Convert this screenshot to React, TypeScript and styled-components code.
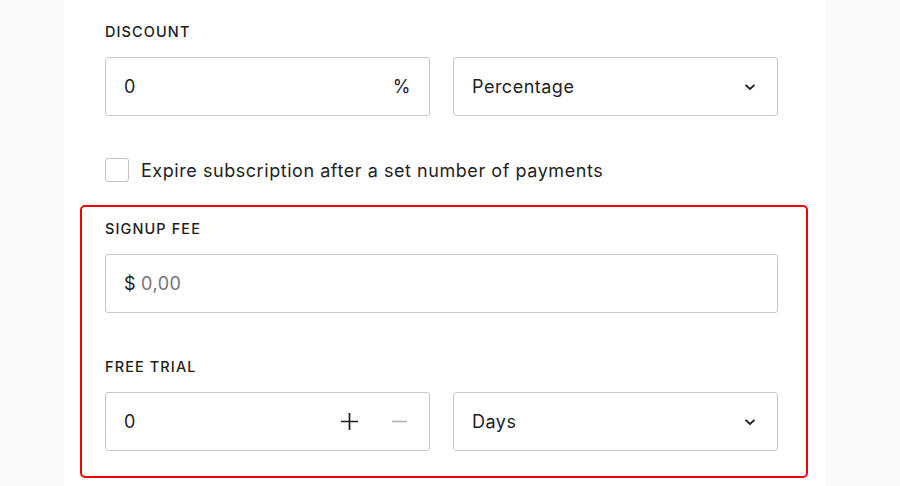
import styled, { createGlobalStyle } from 'styled-components';

const GlobalStyle = createGlobalStyle`
  html, body {
    margin: 0;
    padding: 0;
    background: #fafafa;
  }
  body {
    font-family: Inter, "Noto Sans", "Liberation Sans", sans-serif;
    color: #1e1e1e;
  }
`;

export default function App() {
  return (
    <>
      <GlobalStyle />
      <Page>
        <Panel>
          <Label>Discount</Label>
          <Row>
            <InputBox>
              <Value>0</Value>
              <Suffix>%</Suffix>
            </InputBox>
            <SelectBox>
              <Value>Percentage</Value>
              <Chevron />
            </SelectBox>
          </Row>

          <CheckRow>
            <CheckBox />
            <CheckText>Expire subscription after a set number of payments</CheckText>
          </CheckRow>

          <Highlight>
            <Label>Signup fee</Label>
            <InputBox>
              <Prefix>$</Prefix>
              <Placeholder>0,00</Placeholder>
            </InputBox>

            <Label $spaced>Free trial</Label>
            <Row>
              <InputBox>
                <Value>0</Value>
                <Stepper>
                  <StepButton aria-label="Increment">
                    <svg width="19" height="19" viewBox="0 0 19 19">
                      <path d="M9.5 1v17M1 9.5h17" stroke="#1e1e1e" strokeWidth="1.7" fill="none" />
                    </svg>
                  </StepButton>
                  <StepButton aria-label="Decrement">
                    <svg width="17" height="19" viewBox="0 0 17 19">
                      <path d="M1 9.5h15" stroke="#b4b4b4" strokeWidth="1.7" fill="none" />
                    </svg>
                  </StepButton>
                </Stepper>
              </InputBox>
              <SelectBox>
                <Value>Days</Value>
                <Chevron />
              </SelectBox>
            </Row>
          </Highlight>
        </Panel>
      </Page>
    </>
  );
}

function Chevron() {
  return (
    <ChevronIcon width="12" height="8" viewBox="0 0 12 8">
      <path d="M1.5 1.8 6 6 10.5 1.8" stroke="#1e1e1e" strokeWidth="1.8" fill="none" />
    </ChevronIcon>
  );
}

const Page = styled.div`
  display: flex;
  min-height: 486px;
  background: #fafafa;
`;

const Panel = styled.main`
  margin-left: 64px;
  width: 762px;
  box-sizing: border-box;
  min-height: 486px;
  background: #ffffff;
  padding: 22px 0 0 41px;
  display: flex;
  flex-direction: column;
`;

const Label = styled.div<{ $spaced?: boolean }>`
  font-size: 14.5px;
  line-height: 20px;
  font-weight: 500;
  text-transform: uppercase;
  letter-spacing: 1.1px;
  color: #1e1e1e;
  margin-top: ${(p) => (p.$spaced ? '44px' : '0')};
  margin-bottom: 15px;
`;

const Row = styled.div`
  display: grid;
  grid-template-columns: 325px 325px;
  column-gap: 23px;
  width: 673px;
`;

const Field = styled.div`
  box-sizing: border-box;
  height: 59px;
  border: 1px solid #c9c9c9;
  border-radius: 3px;
  background: #fff;
  display: flex;
  align-items: center;
  font-size: 18px;
  letter-spacing: 0.5px;
`;

const InputBox = styled(Field)`
  padding: 0 18px 0 18px;
`;

const SelectBox = styled(Field)`
  padding: 0 21px 0 18px;
  justify-content: space-between;
`;

const Value = styled.span`
  flex: 1;
  color: #1e1e1e;
`;

const Suffix = styled.span`
  color: #1e1e1e;
`;

const Prefix = styled.span`
  color: #1e1e1e;
  margin-right: 5px;
`;

const Placeholder = styled.span`
  color: #757575;
`;

const ChevronIcon = styled.svg`
  flex: none;
`;

const Stepper = styled.div`
  display: flex;
  align-items: center;
  gap: 32px;
  margin-right: 3px;
`;

const StepButton = styled.span`
  display: flex;
  align-items: center;
  justify-content: center;
`;

const CheckRow = styled.label`
  display: flex;
  align-items: center;
  gap: 12px;
  margin-top: 42px;
  height: 24px;
`;

const CheckBox = styled.span`
  box-sizing: border-box;
  width: 24px;
  height: 24px;
  border: 1px solid #c3c3c3;
  border-radius: 3px;
  background: #fff;
  flex: none;
`;

const CheckText = styled.span`
  font-size: 18px;
  letter-spacing: 0.55px;
  color: #1e1e1e;
`;

const Highlight = styled.section`
  margin: 23px 0 0 -25px;
  width: 728px;
  box-sizing: border-box;
  border: 2px solid #f50000;
  border-radius: 5px;
  padding: 12px 28px 25px 23px;
`;
